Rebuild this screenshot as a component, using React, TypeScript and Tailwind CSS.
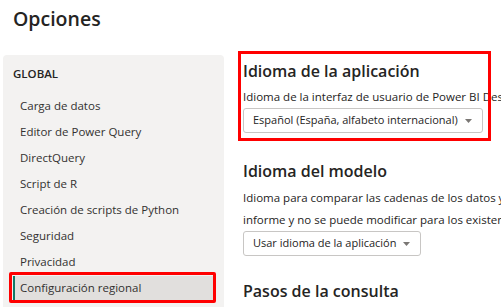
const FONT = { fontFamily: '"Segoe UI", "Open Sans", sans-serif' };

const ITEMS = [
  "Carga de datos",
  "Editor de Power Query",
  "DirectQuery",
  "Script de R",
  "Creación de scripts de Python",
  "Seguridad",
  "Privacidad",
];

function Caret() {
  return (
    <svg width="7" height="4" viewBox="0 0 7 4" className="shrink-0">
      <path d="M0 0 L7 0 L3.5 4 Z" fill="#7a7774" />
    </svg>
  );
}

function Dropdown({ label, width }: { label: string; width: string }) {
  return (
    <div
      className={`flex h-[25px] items-center justify-between rounded-[3px] border border-[#c8c6c4] bg-white pl-[9px] pr-[10px] text-[11px] text-[#252423] ${width}`}
    >
      <span className="whitespace-nowrap">{label}</span>
      <Caret />
    </div>
  );
}

export default function App() {
  return (
    <div
      className="h-[307px] w-[501px] overflow-hidden bg-white text-[#252423]"
      style={FONT}
    >
      {/* Title */}
      <div className="h-[55px] pl-[13px] pt-[5px]">
        <h1 className="text-[19.5px] font-semibold leading-[28px]">Opciones</h1>
      </div>

      <div className="flex">
        {/* Left nav */}
        <div className="ml-[3px] h-[252px] w-[221px] shrink-0 rounded-t-[4px] bg-[#f3f2f1]">
          <div className="pl-[10px] pt-[11px] text-[11.5px] font-semibold leading-[16px]">
            GLOBAL
          </div>
          <div className="mt-[11px]">
            {ITEMS.map((item) => (
              <div
                key={item}
                className="flex h-[26px] items-center pl-[17px] text-[11.5px] text-[#323130]"
              >
                {item}
              </div>
            ))}
            <div className="relative ml-[10px] mr-[11px] mt-[1px] flex h-[24px] items-center border-l-[2px] border-[#117865] bg-[#e1dfdd] pl-[5px] text-[11.5px] text-[#323130]">
              Configuración regional
              <div className="pointer-events-none absolute -left-[6px] -right-[3px] -top-[4px] -bottom-[3px] rounded-[2px] border-[3px] border-[#ff0000]" />
            </div>
          </div>
        </div>

        {/* Right content */}
        <div className="ml-[19px] min-w-0 flex-1">
          <div className="relative pt-[4px]">
            <h2 className="text-[16px] font-semibold leading-[24px]">
              Idioma de la aplicación
            </h2>
            <p className="mt-[3px] whitespace-nowrap text-[11.5px] leading-[22px]">
              Idioma de la interfaz de usuario de Power BI Desktop
            </p>
            <Dropdown
              label="Español (España, alfabeto internacional)"
              width="w-[240px]"
            />
            <div className="pointer-events-none absolute -left-[5px] right-[10px] -top-[4px] -bottom-[8px] border-[3px] border-[#ff0000]" />
          </div>

          <h2 className="mt-[26px] text-[16px] font-semibold leading-[24px]">
            Idioma del modelo
          </h2>
          <div className="mt-[4px] text-[11.5px] leading-[22px]">
            <p className="whitespace-nowrap">
              Idioma para comparar las cadenas de los datos y definir los campos
            </p>
            <p className="whitespace-nowrap">
              informe y no se puede modificar para los existentes.
            </p>
          </div>
          <Dropdown label="Usar idioma de la aplicación" width="w-[178px]" />

          <h2 className="mt-[23px] text-[16px] font-semibold leading-[24px]">
            Pasos de la consulta
          </h2>
        </div>
      </div>
    </div>
  );
}
